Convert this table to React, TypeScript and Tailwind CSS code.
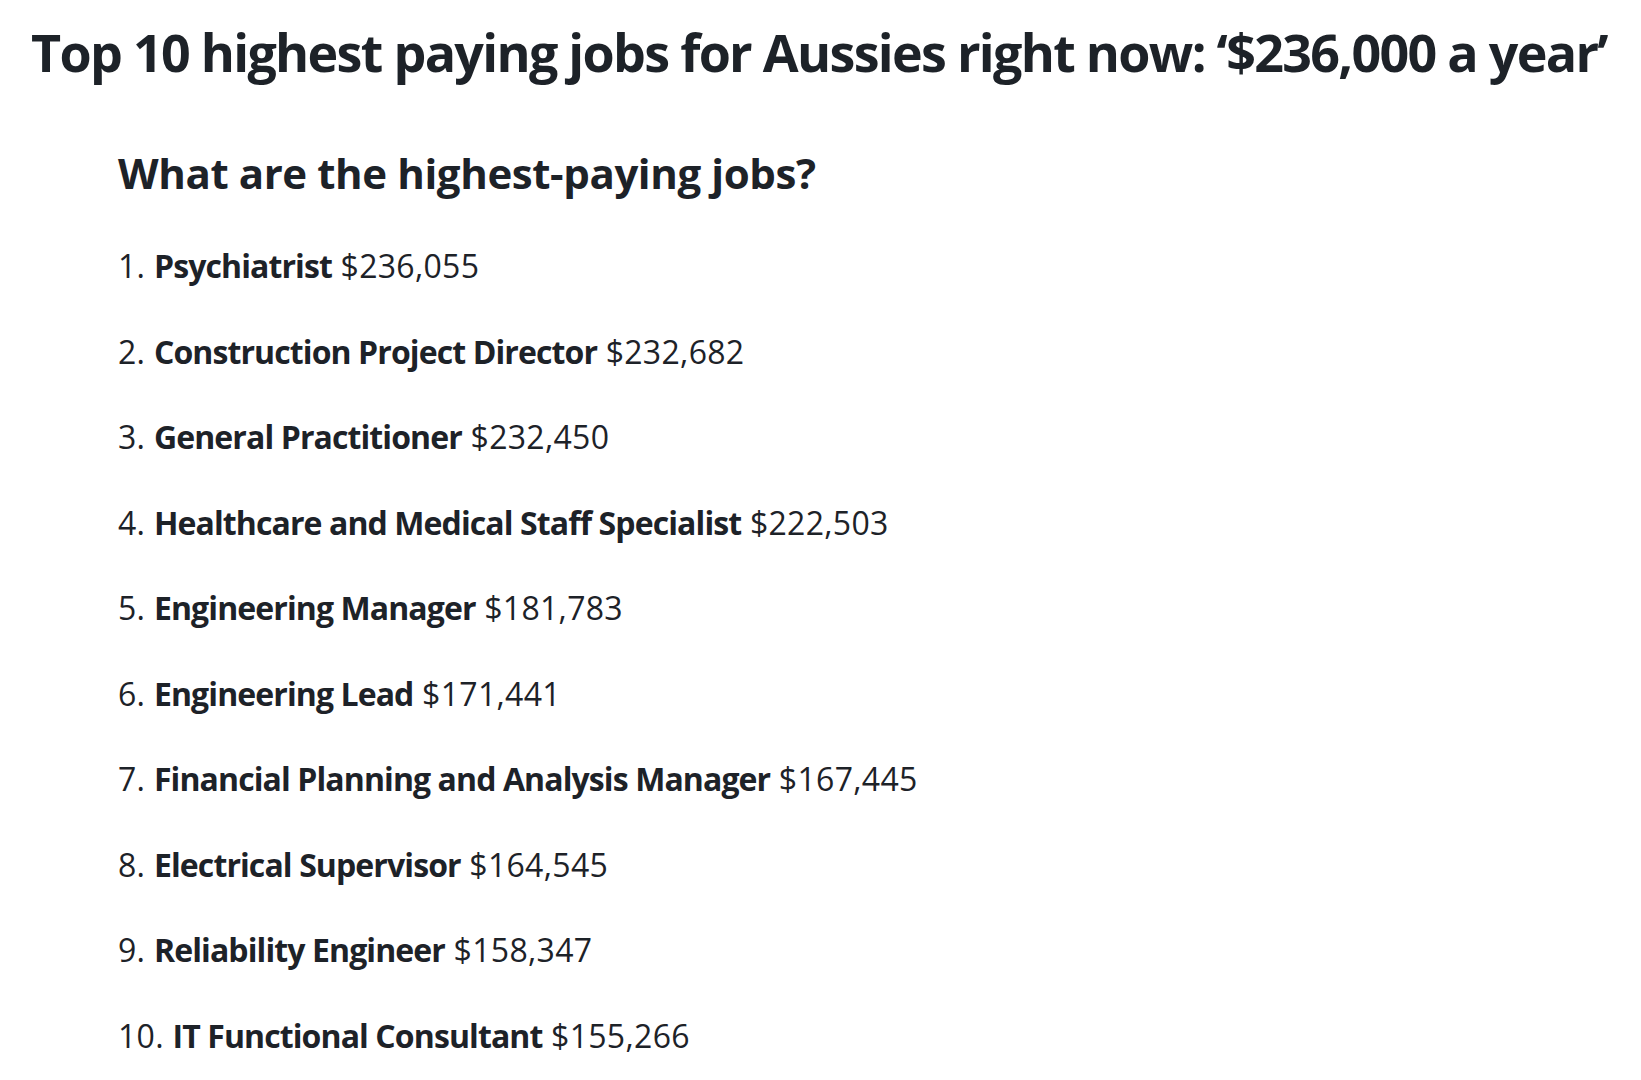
import React from 'react';

const jobs: { title: string; salary: string }[] = [
  { title: 'Psychiatrist', salary: '$236,055' },
  { title: 'Construction Project Director', salary: '$232,682' },
  { title: 'General Practitioner', salary: '$232,450' },
  { title: 'Healthcare and Medical Staff Specialist', salary: '$222,503' },
  { title: 'Engineering Manager', salary: '$181,783' },
  { title: 'Engineering Lead', salary: '$171,441' },
  { title: 'Financial Planning and Analysis Manager', salary: '$167,445' },
  { title: 'Electrical Supervisor', salary: '$164,545' },
  { title: 'Reliability Engineer', salary: '$158,347' },
  { title: 'IT Functional Consultant', salary: '$155,266' },
];

export default function App() {
  return (
    <div className="min-h-screen bg-white text-[#1d2228] font-['Open_Sans',sans-serif]">
      <h1 className="pl-[31px] pt-[20px] text-[52px] font-bold leading-[64px] tracking-[-1.7px] whitespace-nowrap">
        Top 10 highest paying jobs for Aussies right now: ‘$236,000 a year’
      </h1>
      <div className="pl-[118px]">
        <h2 className="mt-[63px] text-[42px] font-bold leading-[52px] tracking-[-0.4px]">
          What are the highest-paying jobs?
        </h2>
        <ol className="mt-[47px] flex flex-col gap-[45.5px] text-[32px] leading-[40px] tracking-[0.3px]">
          {jobs.map((job, i) => (
            <li key={job.title}>
              {i + 1}. <span className="font-bold tracking-[-0.9px]">{job.title}</span> {job.salary}
            </li>
          ))}
        </ol>
      </div>
    </div>
  );
}
